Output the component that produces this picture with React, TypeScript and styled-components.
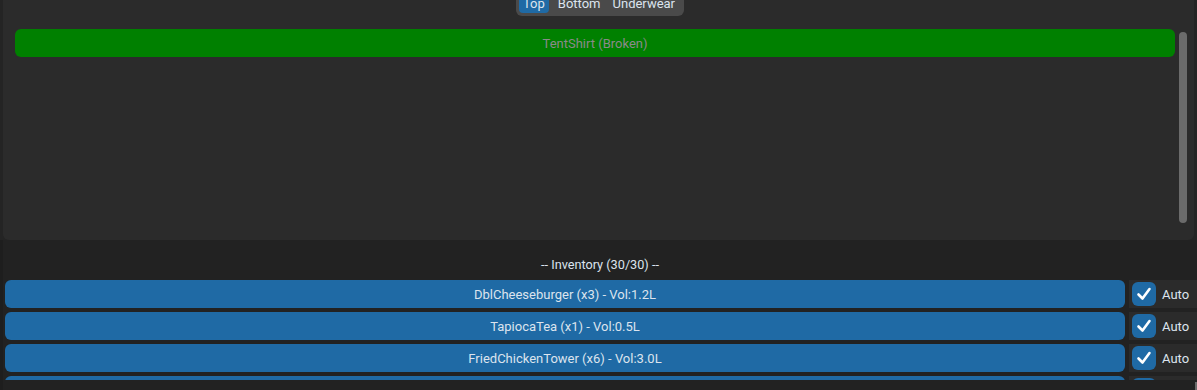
import React from "react";
import styled, { createGlobalStyle } from "styled-components";

const Global = createGlobalStyle`
  html, body { margin: 0; padding: 0; background: #242424; overflow: hidden; }
  body { font-family: Roboto, "Liberation Sans", sans-serif; }
  #root { width: 1197px; height: 390px; overflow: hidden; }
`;

const Page = styled.div`
  width: 1197px;
  height: 390px;
  display: flex;
  flex-direction: column;
  background: #242424;
  overflow: hidden;
`;

const TopPanel = styled.div`
  margin: 0 3px;
  height: 240px;
  flex: none;
  background: #2b2b2b;
  border-radius: 0 0 6px 6px;
  display: flex;
  flex-direction: column;
`;

const SegRow = styled.div`
  display: flex;
  justify-content: center;
  margin-top: -10px;
  height: 26px;
  padding-left: 3px;
`;

const Segmented = styled.div`
  display: flex;
  align-items: center;
  height: 26px;
  padding: 0 3px;
  background: #4a4a4a;
  border-radius: 6px;
  box-sizing: border-box;
`;

const Seg = styled.div<{ $active?: boolean }>`
  height: 20px;
  padding: 0 ${(p) => (p.$active ? "4px" : "6px")};
  display: flex;
  align-items: center;
  font-size: 13px;
  color: #dce4ee;
  background: ${(p) => (p.$active ? "#1f6aa5" : "transparent")};
  border-radius: 4px;
  margin-right: ${(p) => (p.$active ? "3px" : "0")};
`;

const TopBody = styled.div`
  display: flex;
  padding: 13px 0 0 12px;
  gap: 4px;
  flex: 1;
`;

const TopList = styled.div`
  width: 1160px;
  display: flex;
  flex-direction: column;
`;

const BrokenButton = styled.div`
  height: 28px;
  background: #008000;
  border-radius: 6px;
  display: flex;
  align-items: center;
  justify-content: center;
  font-size: 13px;
  color: #8a8a8a;
`;

const VScroll = styled.div`
  margin-top: 3px;
  width: 8px;
  height: 191px;
  background: #6b6b6b;
  border-radius: 4px;
`;

const Bottom = styled.div`
  flex: 1;
  display: flex;
  flex-direction: column;
  background: #222222;
  border-left: 3px solid #1e1e1e;
`;

const InvLabel = styled.div`
  height: 40px;
  display: flex;
  align-items: center;
  justify-content: center;
  font-size: 12.7px;
  color: #dce4ee;
  padding-top: 8px;
  box-sizing: border-box;
`;

const ListClip = styled.div`
  height: 100px;
  overflow: hidden;
  display: flex;
  flex-direction: column;
  gap: 4px;
`;

const Row = styled.div`
  display: flex;
  height: 28px;
  flex: none;
  align-items: stretch;
`;

const ItemButton = styled.div`
  margin-left: 2px;
  width: 1120px;
  background: #1f6aa5;
  border-radius: 6px;
  display: flex;
  align-items: center;
  justify-content: center;
  font-size: 13px;
  color: #dce4ee;
`;

const AutoCell = styled.div`
  margin-left: 4px;
  flex: 1;
  background: #2b2b2b;
  display: flex;
  align-items: center;
  padding-left: 3px;
  gap: 6px;
  font-size: 13px;
  color: #dce4ee;
`;

const Box = styled.div`
  width: 24px;
  height: 24px;
  border-radius: 6px;
  background: #1f6aa5;
  display: flex;
  align-items: center;
  justify-content: center;
`;

const BottomStrip = styled.div`
  flex: 1;
  display: flex;
  justify-content: flex-end;
  align-items: flex-end;
`;

const HThumb = styled.div`
  width: 2px;
  height: 8px;
  background: #6b6b6b;
`;

const items = [
  "DblCheeseburger (x3) - Vol:1.2L",
  "TapiocaTea (x1) - Vol:0.5L",
  "FriedChickenTower (x6) - Vol:3.0L",
  "",
];

const Check = () => (
  <svg width="16" height="16" viewBox="0 0 16 16">
    <polyline
      points="2.5,8.5 6.5,12.5 13.5,3"
      fill="none"
      stroke="#ffffff"
      strokeWidth="2.6"
      strokeLinecap="round"
      strokeLinejoin="round"
    />
  </svg>
);

export default function App() {
  return (
    <Page>
      <Global />
      <TopPanel>
        <SegRow>
          <Segmented>
            <Seg $active>Top</Seg>
            <Seg>Bottom</Seg>
            <Seg>Underwear</Seg>
          </Segmented>
        </SegRow>
        <TopBody>
          <TopList>
            <BrokenButton>TentShirt (Broken)</BrokenButton>
          </TopList>
          <VScroll />
        </TopBody>
      </TopPanel>
      <Bottom>
        <InvLabel>-- Inventory (30/30) --</InvLabel>
        <ListClip>
          {items.map((t, i) => (
            <Row key={i}>
              <ItemButton>{t}</ItemButton>
              <AutoCell>
                <Box>
                  <Check />
                </Box>
                Auto
              </AutoCell>
            </Row>
          ))}
        </ListClip>
        <BottomStrip>
          <HThumb />
        </BottomStrip>
      </Bottom>
    </Page>
  );
}
